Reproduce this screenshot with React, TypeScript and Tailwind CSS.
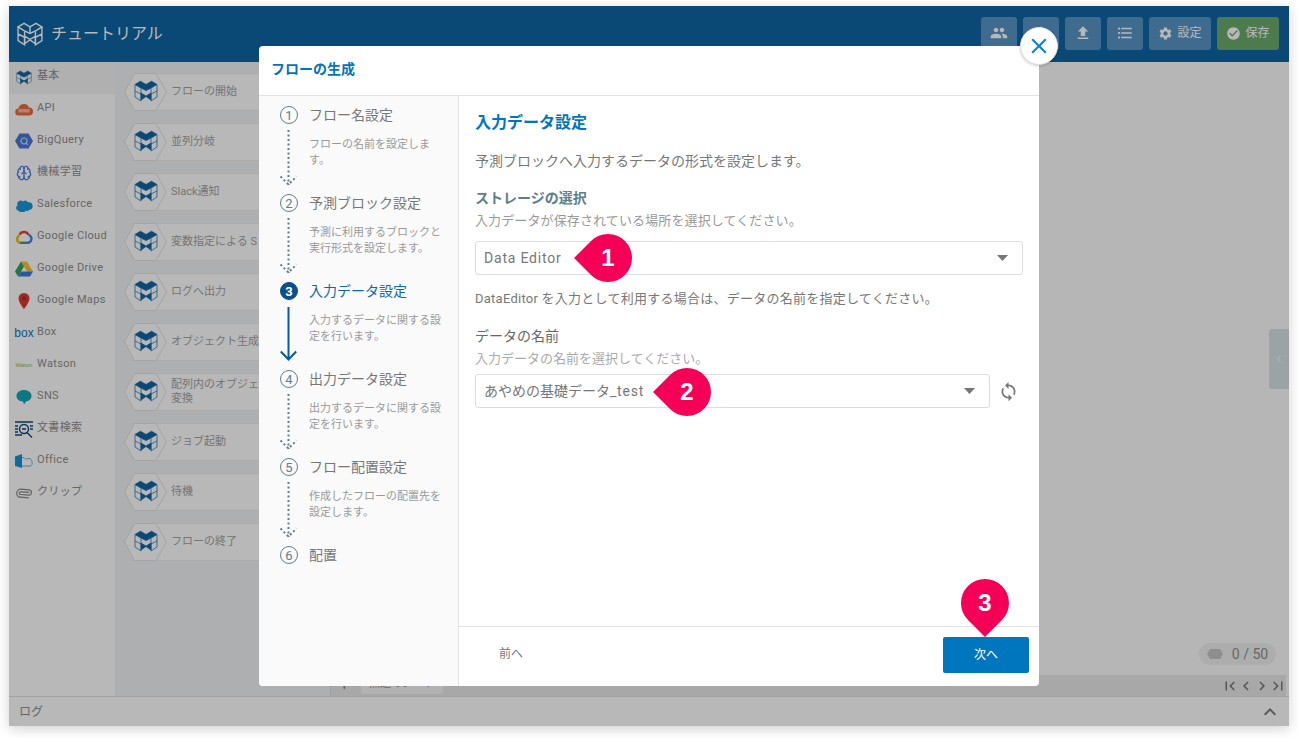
import { ChevronLeft, Paperclip, Brain } from 'lucide-react';
import {
  MdCheckCircle,
  MdChevronLeft,
  MdChevronRight,
  MdClose,
  MdFileUpload,
  MdFirstPage,
  MdFormatListBulleted,
  MdKeyboardArrowUp,
  MdLastPage,
  MdPeople,
  MdSettings,
  MdSync,
} from 'react-icons/md';
import type { ReactNode } from 'react';

const FONT = "font-['Roboto','Noto_Sans_CJK_JP',sans-serif]";

function CubeLogo({ className, light }: { className?: string; light?: boolean }) {
  const line = light ? '#ffffff' : '#0e64a3';
  const fill = light ? 'none' : '#0e64a3';
  return (
    <svg viewBox="0 0 24 22" className={className} fill="none" stroke={line} strokeWidth={light ? 1.3 : 0.7}>
      <path d="M1 4.5 6.5 1.2 12 4.5 17.5 1.2 23 4.5 17.5 7.8 12 10.5 6.5 7.8Z" fill={fill} />
      <path d="M1 4.5V17l6 4V8.5M23 4.5V17l-6 4V8.5M1 11l6 3M23 11l-6 3M12 4.5v6" />
      <path d="M7 13l5 3 5-3v7l-5-3.500-5 3.500Z" fill={fill} />
    </svg>
  );
}

function ApiIcon() {
  return (
    <svg viewBox="0 0 18 14" className="h-[14px] w-[18px]">
      <path d="M4 13.500a3.500 3.500 0 0 1-.5-7A5.500 5.500 0 0 1 14 5.500a4 4 0 0 1 0 8Z" fill="#ee6a3c" />
      <rect x="3.500" y="7" width="11" height="3.500" fill="#f7b8a0" />
    </svg>
  );
}

function BigQueryIcon() {
  return (
    <svg viewBox="0 0 18 16" className="h-4 w-[18px]">
      <path d="M4.500.5h9L18 8l-4.500 7.500h-9L0 8Z" fill="#4a76d8" />
      <circle cx="9" cy="8" r="3" fill="none" stroke="#cfdcf7" strokeWidth="1.200" />
      <path d="m11 10 1.800 1.800" stroke="#cfdcf7" strokeWidth="1.200" />
    </svg>
  );
}

function SalesforceIcon() {
  return (
    <svg viewBox="0 0 18 13" className="h-[13px] w-[18px]">
      <path d="M4 12a3 3 0 0 1-1.500-5.500A3.500 3.500 0 0 1 8 2.500a3.500 3.500 0 0 1 5 .8 3.800 3.800 0 0 1 1.500 7.500 3 3 0 0 1-4 .7A3.500 3.500 0 0 1 4 12Z" fill="#1798dc" />
    </svg>
  );
}

function GoogleCloudIcon() {
  return (
    <svg viewBox="0 0 18 14" className="h-[14px] w-[18px]" fill="none" strokeWidth="2.400">
      <path d="M4.500 4.800A5 5 0 0 1 13.500 4.800" stroke="#ea4335" />
      <path d="M13.500 4.800A4.200 4.200 0 0 1 13.500 12.800H11" stroke="#4285f4" />
      <path d="M11 12.800H5" stroke="#34a853" />
      <path d="M5 12.800A3.800 3.800 0 0 1 4.500 5.600" stroke="#fbbc05" />
    </svg>
  );
}

function DriveIcon() {
  return (
    <svg viewBox="0 0 18 16" className="h-4 w-[18px]">
      <path d="M6 .5h6L18 10.500h-6Z" fill="#fbc02d" />
      <path d="M6 .5 0 10.500l3 5L9 5.500Z" fill="#2fa45a" />
      <path d="M6 10.500h12l-3 5H3Z" fill="#3b78e7" />
    </svg>
  );
}

function MapsIcon() {
  return (
    <svg viewBox="0 0 12 16" className="h-4 w-3">
      <path d="M6 0a5.500 5.500 0 0 1 5.500 5.500C11.500 9.500 6 16 6 16S.5 9.500.5 5.500A5.500 5.500 0 0 1 6 0Z" fill="#d93a32" />
      <circle cx="6" cy="5.500" r="2" fill="#a82a25" />
    </svg>
  );
}

function SnsIcon() {
  return (
    <svg viewBox="0 0 16 15" className="h-[15px] w-4">
      <path d="M8 0c4.400 0 7.500 2.500 7.500 5.800S12.800 11.500 10 11.500L8 14.500l-1-3C3 11.500.5 9 .5 5.800S3.600 0 8 0Z" fill="#12a5b5" />
    </svg>
  );
}

function SearchDocIcon() {
  return (
    <svg viewBox="0 0 18 17" className="h-[17px] w-[18px]" fill="none" stroke="#10477a" strokeWidth="1.400">
      <path d="M0 1h18M0 5h3M0 8h3M0 11h3M15 5h3M15 8h3M0 14h7" />
      <circle cx="9" cy="8" r="4.500" />
      <path d="M7 8h4M12 11.500l5 5" />
    </svg>
  );
}

function OfficeIcon() {
  return (
    <svg viewBox="0 0 18 14" className="h-[14px] w-[18px]">
      <path d="M0 2.500 7 0v14l-7-2Z" fill="#1592d8" />
      <path d="M7 3.500a4 4 0 0 1 4 2 3.500 3.500 0 0 1 6 3A2.500 2.500 0 0 1 15 12H7" fill="none" stroke="#5cb4e4" strokeWidth="1" />
    </svg>
  );
}

const categories: { label: string; icon: ReactNode; active?: boolean }[] = [
  { label: '基本', icon: <CubeLogo className="h-[15px] w-4" />, active: true },
  { label: 'API', icon: <ApiIcon /> },
  { label: 'BigQuery', icon: <BigQueryIcon /> },
  { label: '機械学習', icon: <Brain className="h-4 w-4 text-[#4a80e0]" strokeWidth={2} /> },
  { label: 'Salesforce', icon: <SalesforceIcon /> },
  { label: 'Google Cloud', icon: <GoogleCloudIcon /> },
  { label: 'Google Drive', icon: <DriveIcon /> },
  { label: 'Google Maps', icon: <MapsIcon /> },
  { label: 'Box', icon: <span className="font-['Liberation_Sans',sans-serif] text-[12px] leading-none text-[#0f76c2]">box</span> },
  { label: 'Watson', icon: <span className="font-['Liberation_Sans',sans-serif] text-[5px] leading-none text-[#8fb64a]">Watson</span> },
  { label: 'SNS', icon: <SnsIcon /> },
  { label: '文書検索', icon: <SearchDocIcon /> },
  { label: 'Office', icon: <OfficeIcon /> },
  { label: 'クリップ', icon: <Paperclip className="h-4 w-4 rotate-[50deg] text-[#8a8a8a]" strokeWidth={1.800} /> },
];

const blocks: ReactNode[] = [
  'フローの開始',
  '並列分岐',
  'Slack通知',
  '変数指定による S',
  'ログへ出力',
  'オブジェクト生成',
  <>
    配列内のオブジェ
    <br />
    変換
  </>,
  'ジョブ起動',
  '待機',
  'フローの終了',
];

const steps = [
  { title: 'フロー名設定', desc: ['フローの名前を設定しま', 'す。'] },
  { title: '予測ブロック設定', desc: ['予測に利用するブロックと', '実行形式を設定します。'] },
  { title: '入力データ設定', desc: ['入力するデータに関する設', '定を行います。'], active: true },
  { title: '出力データ設定', desc: ['出力するデータに関する設', '定を行います。'] },
  { title: 'フロー配置設定', desc: ['作成したフローの配置先を', '設定します。'] },
  { title: '配置', desc: [] },
];

function BlockRow({ children }: { children: ReactNode }) {
  return (
    <div className="isolate flex h-[38px] items-stretch">
      <div className="relative z-10 h-[38px] w-[43px] shrink-0">
        <svg viewBox="0 0 43 38" className="absolute inset-0 h-full w-full">
          <path d="M10.500.5H32L42.500 19 32 37.500H10.500L.5 19Z" fill="#ffffff" stroke="#e2e2e2" />
        </svg>
        <CubeLogo className="absolute left-[10px] top-[7px] h-[22px] w-6" />
      </div>
      <div className="-ml-[10px] flex min-w-0 flex-1 items-center border-y border-[#eeeeee] bg-white pl-[14px] text-[11px] leading-[14px] text-[#a3a3a3]">
        <span className="whitespace-nowrap">{children}</span>
      </div>
    </div>
  );
}

function HeaderButton({ children, wide, green }: { children: ReactNode; wide?: boolean; green?: boolean }) {
  return (
    <button className={`flex h-[33px] items-center justify-center gap-[4px] rounded-[3px] text-[12px] text-white ${wide ? 'w-[62px]' : 'w-[36px]'} ${green ? 'bg-[#6bab6b]' : 'bg-[#5895c7]'}`}>
      {children}
    </button>
  );
}

function SelectBox({ children, className }: { children: ReactNode; className?: string }) {
  return (
    <div className={`flex h-[34px] items-center justify-between rounded-[3px] border border-[#dddddd] pl-2 pr-[14px] text-[14px] text-[#777777] ${className ?? ''}`}>
      <span>{children}</span>
      <svg viewBox="0 0 11 6" className="h-[6px] w-[11px]">
        <path d="M0 0h11L5.500 6Z" fill="#777777" />
      </svg>
    </div>
  );
}

function StepArrow({ active }: { active?: boolean }) {
  if (active) {
    return (
      <svg viewBox="0 0 17 54" className="mt-[7px] h-[54px] w-[17px]" fill="none" stroke="#0a5a9c" strokeWidth="2">
        <path d="M8.500 0v52M.8 44.500l7.700 8 7.700-8" />
      </svg>
    );
  }
  return (
    <svg viewBox="0 0 17 56" className="mt-[6px] h-[56px] w-[17px]" fill="none" stroke="#607d8b" strokeWidth="2" strokeDasharray="2 2.500">
      <path d="M8.500 0v55M.5 46.500l8 8 8-8" />
    </svg>
  );
}

function Marker({ n, className }: { n: number; className: string }) {
  return (
    <div className={`absolute flex h-12 w-12 items-center justify-center ${className}`}>
      <div className="absolute inset-0 rotate-[-45deg] rounded-full rounded-tl-none bg-[#f50057]" />
      <span className="relative font-['Liberation_Sans',sans-serif] text-[24px] font-bold leading-none text-white">{n}</span>
    </div>
  );
}

export default function App() {
  return (
    <div className={`h-[738px] w-[1298px] overflow-hidden bg-white px-[9px] pt-[6px] ${FONT}`}>
      <div className="relative flex h-[720px] w-[1280px] flex-col shadow-[0_3px_12px_rgba(0,0,0,0.18)]">
        <header className="flex h-[56px] shrink-0 items-center justify-between bg-[#0e64a3] pl-2 pr-[10px]">
          <div className="flex items-center gap-2">
            <CubeLogo light className="h-[24px] w-[26px]" />
            <span className="text-[16px] text-white">チュートリアル</span>
          </div>
          <div className="flex -translate-y-[1px] gap-[6px]">
            <HeaderButton><MdPeople size={18} /></HeaderButton>
            <HeaderButton><MdFileUpload size={18} /></HeaderButton>
            <HeaderButton><MdFileUpload size={18} /></HeaderButton>
            <HeaderButton><MdFormatListBulleted size={18} /></HeaderButton>
            <HeaderButton wide><MdSettings size={15} />設定</HeaderButton>
            <HeaderButton wide green><MdCheckCircle size={15} />保存</HeaderButton>
          </div>
        </header>

        <div className="flex min-h-0 flex-1">
          <nav className="w-[106px] shrink-0 bg-white text-[11px] tracking-[0.35px] text-[#8e8e8e]">
            {categories.map((c) => (
              <div key={c.label} className={`flex h-[32px] items-center ${c.active ? 'bg-[#f4f4f4]' : ''}`}>
                <span className="flex w-[28px] shrink-0 -translate-y-[1px] items-center justify-center pl-[2px] tracking-normal">{c.icon}</span>
                <span className="-translate-y-[2px] whitespace-nowrap">{c.label}</span>
              </div>
            ))}
          </nav>

          <div className="flex w-[215px] shrink-0 flex-col gap-3 bg-[#f2f3f4] pl-[9px] pr-[8px] pt-[11px]">
            {blocks.map((b, i) => (
              <BlockRow key={i}>{b}</BlockRow>
            ))}
          </div>

          <div className="relative flex min-w-0 flex-1 flex-col bg-[#fdfdfd]">
            <div className="flex-1" />
            <div className="absolute right-0 top-[267px] flex h-[60px] w-5 items-center justify-center rounded-l-[3px] bg-[#d6e4e9] text-white">
              <ChevronLeft size={12} />
            </div>
            <div className="absolute right-[13px] top-[581px] flex h-[22px] w-[77px] items-center justify-center gap-[9px] rounded-full bg-[#f0f0f0] text-[14px] text-[#8e8e8e]">
              <svg viewBox="0 0 16 10" className="h-[10px] w-4">
                <path d="M3 0h10l3 5-3 5H3L0 5Z" fill="#c5c5c5" />
              </svg>
              <span>0 / 50</span>
            </div>
            <div className="mr-[3px] flex h-[21px] items-center justify-between border-l border-[#dddddd] bg-[#e9e9e9]">
              <div className="flex h-full items-center">
                <span className="ml-[9px] w-[21px] text-[15px] leading-none text-[#777777]">+</span>
                <div className="flex h-[19px] w-[82px] items-center justify-center self-start rounded-b-[3px] bg-[#f7f7f7] text-[11px] text-[#999999]">無題のシート</div>
              </div>
              <div className="flex items-center text-[#777777]">
                <MdFirstPage size={18} className="-mx-px" />
                <MdChevronLeft size={18} className="-mx-px" />
                <MdChevronRight size={18} className="-mx-px" />
                <MdLastPage size={18} className="-mx-px" />
              </div>
            </div>
          </div>
        </div>

        <footer className="flex h-[30px] shrink-0 items-center justify-between border-t border-[#e2e2e2] bg-white pl-[10px] pr-[7px] text-[12px] text-[#8e8e8e]">
          <span>ログ</span>
          <MdKeyboardArrowUp size={24} className="text-[#7a7a7a]" />
        </footer>

        <div className="absolute inset-0 bg-black/[0.28]" />

        <div className="absolute left-[250px] top-[40px] flex h-[640px] w-[780px] flex-col rounded-[4px] bg-white">
          <div className="flex h-[50px] shrink-0 items-center border-b border-[#e2e2e2] pb-[2px] pl-3 text-[14px] font-bold text-[#0076be]">
            フローの生成
          </div>
          <div className="flex min-h-0 flex-1">
            <div className="w-[200px] shrink-0 rounded-bl-[4px] border-r border-[#e2e2e2] bg-[#fafafa] pl-[21px] pt-[8px]">
              {steps.map((s, i) => (
                <div key={s.title} className="flex h-[88px] gap-[11px]">
                  <div className="w-[18px] shrink-0 pt-[2px]">
                    <div className={`flex h-[18px] w-[18px] items-center justify-center rounded-full border text-[13px] leading-none ${s.active ? 'border-[#0a4f8a] bg-[#0a4f8a] font-bold text-white' : 'border-[#607d8b] text-[#607d8b]'}`}>
                      {i + 1}
                    </div>
                    {i < steps.length - 1 && <StepArrow active={s.active} />}
                  </div>
                  <div className="min-w-0">
                    <div className={`h-[24px] text-[14px] leading-[22px] ${s.active ? 'text-[#0a69ae]' : 'text-[#777777]'}`}>{s.title}</div>
                    <div className="mt-[9px] text-[11px] leading-[16px] text-[#999999]">
                      {s.desc.map((d) => (
                        <div key={d} className="whitespace-nowrap">{d}</div>
                      ))}
                    </div>
                  </div>
                </div>
              ))}
            </div>

            <div className="flex min-w-0 flex-1 flex-col">
              <div className="flex-1 pl-[16px] pr-[16px] pt-[16px]">
                <h2 className="text-[16px] font-bold leading-[22px] text-[#0076be]">入力データ設定</h2>
                <p className="mt-[17px] text-[14px] leading-[20px] text-[#777777]">予測ブロックへ入力するデータの形式を設定します。</p>
                <h3 className="mt-[17px] text-[14px] font-bold leading-[20px] text-[#607d8b]">ストレージの選択</h3>
                <p className="mt-[3px] text-[13px] leading-[20px] tracking-[0.12px] text-[#999999]">入力データが保存されている場所を選択してください。</p>
                <SelectBox className="mt-[10px]"><span className="tracking-[0.8px]">Data Editor</span></SelectBox>
                <p className="mt-[14px] text-[13px] leading-[20px] tracking-[0.25px] text-[#777777]">DataEditor を入力として利用する場合は、データの名前を指定してください。</p>
                <h3 className="mt-[17px] text-[14px] leading-[20px] text-[#666666]">データの名前</h3>
                <p className="mt-[3px] text-[13px] leading-[20px] text-[#aaaaaa]">入力データの名前を選択してください。</p>
                <div className="mt-[5px] flex items-center gap-[8px]">
                  <SelectBox className="w-[515px]">あやめの基礎データ<span className="tracking-[0.8px]">_test</span></SelectBox>
                  <MdSync size={21} className="text-[#777777]" />
                </div>
              </div>
              <div className="flex h-[60px] shrink-0 items-start justify-between border-t border-[#e2e2e2] pl-[40px] pr-[10px] pt-[10px]">
                <span className="mt-[8px] text-[12px] leading-[18px] text-[#777777]">前へ</span>
                <button className="h-[36px] w-[86px] rounded-[2px] bg-[#0076be] text-[12px] text-white">次へ</button>
              </div>
            </div>
          </div>
        </div>

        <button className="absolute left-[1011px] top-[21px] flex h-[38px] w-[38px] items-center justify-center rounded-full border border-[#e0e0e0] bg-white text-[#0a84cc] shadow-[0_1px_3px_rgba(0,0,0,0.2)]">
          <MdClose size={26} />
        </button>

        <Marker n={1} className="left-[575px] top-[228px]" />
        <Marker n={2} className="left-[654px] top-[362px]" />
        <Marker n={3} className="left-[952px] top-[573px] rotate-[-90deg] [&>span]:rotate-90" />
      </div>
    </div>
  );
}
